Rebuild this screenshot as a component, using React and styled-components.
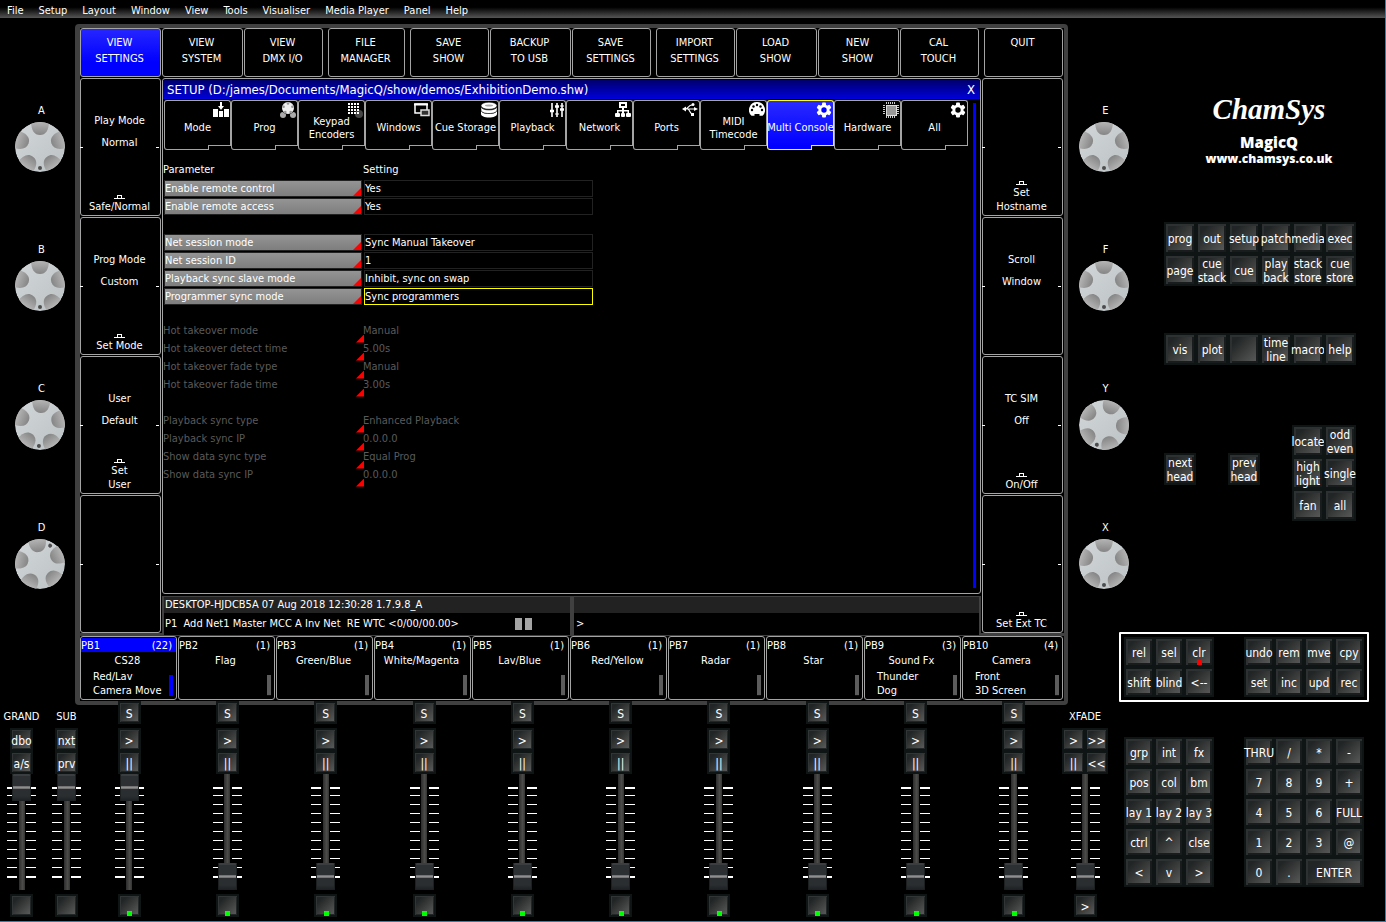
import React from "react";
import styled, { createGlobalStyle, css } from "styled-components";

const GlobalStyle = createGlobalStyle`
    *, *::before, *::after {
        box-sizing: border-box;
    }
    body {
        margin: 0;
        background: #000;
        color: #fff;
        font-family: "DejaVu Sans Condensed", "DejaVu Sans", sans-serif;
        font-stretch: condensed;
        font-size: 11px;
        line-height: 14px;
    }
    button, input {
        font: inherit;
        color: inherit;
        margin: 0;
        padding: 0;
    }
    button {
        border: none;
        background: none;
    }
`;

const Page = styled.div`
    min-height: 100vh;
    border-right: 1px solid #1883d7;
    border-bottom: 1px solid #1883d7;
`;

const MenuBar = styled.nav`
    display: flex;
    gap: 15px;
    height: 18px;
    padding: 2px 7px 0;
    background: linear-gradient(#000 40%, #555);
`;

const MenuItem = styled.button`
    height: 16px;
    padding-top: 1px;
    line-height: 16px;
`;

const Console = styled.div`
    display: grid;
    grid-template-columns: 75px minmax(900px, 1fr) 51px 10px 256px;
    grid-template-rows: auto 69px auto;
`;

/* ---- rotary encoders ---- */

const Encoders = styled.div`
    grid-row: 1;
    grid-column: ${props => props.$side === "left" ? "1" : "3 / 5"};
    display: flex;
    flex-direction: column;
    align-items: flex-end;
    gap: 71px;
    padding: 86px ${props => props.$side === "left" ? 10 : 0}px 43px 0;
`;

const EncoderBlock = styled.div`
    display: flex;
    flex-direction: column;
    align-items: center;
    gap: 4px;
    width: 50px;
`;

const EncoderLabel = styled.span`
    padding-left: 3px;
`;

const Knob = ({ turn }) => (
    <svg width="50" height="50" viewBox="-25 -25 50 50" aria-hidden="true">
        <defs>
            <linearGradient id="knobFace" x1="0" y1="0" x2="1" y2="1">
                <stop offset="0" stopColor="#d2d6d8" />
                <stop offset="1" stopColor="#bcc3c5" />
            </linearGradient>
            <linearGradient id="knobDimple" x1="0" y1="0" x2="0" y2="1">
                <stop offset="0" stopColor="#b9b8b8" />
                <stop offset="1" stopColor="#858585" />
            </linearGradient>
            <clipPath id="knobClip"><circle r="25" /></clipPath>
        </defs>
        <g clipPath="url(#knobClip)">
            <circle r="25" fill="url(#knobFace)" />
            <g transform={`rotate(${turn})`}>
                {[0, 72, 144, 216, 288].map(angle => (
                    <path
                        key={angle}
                        transform={`rotate(${angle})`}
                        d="M-9-26C-9-17-6-12 0-12S9-17 9-26Z"
                        fill="url(#knobDimple)"
                    />
                ))}
                <circle cy="21" r="2" fill="#4c4c4c" />
            </g>
        </g>
    </svg>
);

const Encoder = ({ name, turn = 0 }) => (
    <EncoderBlock>
        <EncoderLabel>{name}</EncoderLabel>
        <Knob turn={turn} />
    </EncoderBlock>
);

/* ---- screen ---- */

const Screen = styled.main`
    grid-row: 1 / 3;
    grid-column: 2;
    align-self: start;
    margin: 6px 0 -4px;
    border: 4px solid #404040;
    border-left-width: 5px;
    border-radius: 4px;
`;

const box = css`
    border: 1px solid #a4a4a4;
    border-radius: 3px;
    background: #000;
`;

const SoftKeys = styled.div`
    display: grid;
    grid-template-columns: repeat(12, 1fr);
    margin-bottom: 1px;
`;

const SoftKey = styled.button`
    ${box}
    display: flex;
    justify-content: center;
    height: 49px;
    padding: 6px 2px 0 0;
    margin: 0 ${props => props.$groupEnd ? 3 : 1}px 0 ${props => props.$groupStart ? 2 : 0}px;
    line-height: 16px;
    white-space: pre-line;
    background: ${props => props.$active ? "linear-gradient(#2626ff, #0000ff 70%)" : "#000"};
`;

const Middle = styled.div`
    display: grid;
    grid-template-columns: 81px 1fr 81px;
    gap: 1px;
    padding-right: 1px;
    background: #000;
`;

const SideColumn = styled.div`
    display: flex;
    flex-direction: column;
    gap: 1px;
`;

const SideButton = styled.button`
    ${box}
    position: relative;
    display: flex;
    flex-direction: column;
    align-items: center;
    height: 138px;
    padding: 35px 2px 1px 0;
    &::before, &::after {
        content: "";
        position: absolute;
        top: 68px;
        width: 3px;
        height: 1px;
        background: #fff;
    }
    &::before {
        left: -1px;
    }
    &::after {
        right: 1px;
    }
`;

const SideText = styled.span`
    height: 22px;
`;

const PushLabel = styled.span`
    display: flex;
    flex-direction: column;
    align-items: center;
    gap: 1px;
    margin-top: auto;
    white-space: pre-line;
`;

const PushIcon = () => (
    <svg width="11" height="4" viewBox="0 0 11 4" shapeRendering="crispEdges" aria-hidden="true">
        <path d="M0 3.5H11M3.5 3V.5H7.5V3" fill="none" stroke="#fff" />
    </svg>
);

const Main = styled.div`
    display: flex;
    flex-direction: column;
    gap: 2px;
    min-width: 0;
`;

const SetupWindow = styled.section`
    ${box}
    position: relative;
    flex: 1;
    padding-top: 1px;
`;

const TitleBar = styled.header`
    display: flex;
    justify-content: space-between;
    height: 19px;
    padding: 0 5px 0 4px;
    font-size: 13px;
    line-height: 20px;
    background: linear-gradient(#00006c, #0000dc);
`;

const Title = styled.h1`
    margin: 0;
    font-size: 13px;
    font-weight: normal;
`;

const Tabs = styled.div`
    display: grid;
    grid-template-columns: repeat(12, 67px);
    margin: 1px 0 0 1px;
`;

const Tab = styled.button`
    --line: ${props => props.$active ? "#ffff00" : "#a4a4a4"};
    --fill: ${props => props.$active ? "#0000ff" : "#000"};
    position: relative;
    display: flex;
    align-items: center;
    justify-content: center;
    height: 46px;
    padding-top: 8px;
    line-height: 13px;
    white-space: pre;
    border: 1px solid var(--line);
    border-bottom: none;
    border-radius: 3px 3px 0 0;
    background: ${props => props.$active ? "linear-gradient(#2a2aff, #0000ff)" : "#000"};
    &::before {
        content: "";
        position: absolute;
        left: -1px;
        bottom: -4px;
        width: 45px;
        height: 5px;
        border: 1px solid var(--line);
        border-top: none;
        border-bottom-left-radius: 3px;
        background: var(--fill);
    }
    &::after {
        content: "";
        position: absolute;
        left: 43px;
        right: 0;
        bottom: 0;
        height: 1px;
        background: var(--line);
    }
    svg {
        position: absolute;
        top: 1px;
        right: 1px;
    }
`;

const ScrollBar = styled.div`
    position: absolute;
    top: 24px;
    right: 4px;
    bottom: 5px;
    width: 3px;
    background: #0000ff;
`;

const Settings = styled.table`
    table-layout: fixed;
    width: 430px;
    margin-top: 15px;
    border-collapse: collapse;
    th, td {
        height: 18px;
        padding: 0;
        text-align: left;
        font-weight: normal;
    }
    thead th {
        height: 19px;
        padding-bottom: 2px;
    }
`;

const SpacerCell = styled.td`
    && {
        height: ${props => props.$height}px;
    }
`;

const NameColumn = styled.col`
    width: 200px;
`;

const ParamName = styled.div`
    position: relative;
    height: 17px;
    margin: 0 1px 1px;
    line-height: 16px;
    border: 1px solid #222;
    background: linear-gradient(#949494, #7e7e7e);
    &::after {
        content: "";
        position: absolute;
        right: 0;
        bottom: 0;
        width: 8px;
        height: 8px;
        background: #f00;
        clip-path: polygon(100% 0, 100% 100%, 0 100%);
    }
    ${props => props.$disabled && css`
        color: #5a5a5a;
        margin: 0;
        line-height: 14px;
        border: none;
        background: none;
        &::after {
            right: -1px;
            bottom: -2px;
        }
    `}
`;

const ParamValue = styled.div`
    height: 17px;
    margin: 0 0 1px 1px;
    line-height: 16px;
    border: 1px solid ${props => props.$selected ? "#ffff00" : "#222"};
    ${props => props.$disabled && css`
        color: #5a5a5a;
        margin: 0;
        line-height: 14px;
        border: none;
    `}
`;

const StatusBar = styled.div`
    display: grid;
    grid-template-columns: 406px 1fr;
    gap: 4px;
    height: 37px;
    padding: 1px 2px 0;
    background: #404040;
`;

const StatusCell = styled.div`
    padding-left: ${props => props.$inset}px;
    background: linear-gradient(#222 16px, #000 16px);
    white-space: pre;
`;

const StatusLine = styled.div`
    display: flex;
    align-items: center;
    justify-content: space-between;
    height: ${props => props.$tall ? 22 : 16}px;
    padding-right: 38px;
`;

const PauseMark = () => (
    <svg width="17" height="12" viewBox="0 0 17 12" fill="#a4a4a4" role="img" aria-label="Paused">
        <rect width="7" height="12" />
        <rect x="10" width="7" height="12" />
    </svg>
);

const Playbacks = styled.div`
    display: grid;
    grid-template-columns: repeat(9, 98fr) 102fr;
    border-top: 3px solid #404040;
    padding-bottom: 1px;
`;

const Playback = styled.button`
    ${box}
    position: relative;
    display: flex;
    flex-direction: column;
    height: 64px;
    margin-right: 1px;
    padding-top: 1px;
    text-align: left;
    &::after {
        content: "";
        position: absolute;
        right: 3px;
        bottom: 3px;
        width: 4px;
        height: 21px;
        background: ${props => props.$active ? "#0000ff" : "linear-gradient(#5c5c5c 20px, #00008c 20px)"};
    }
`;

const PlaybackHead = styled.span`
    display: flex;
    justify-content: space-between;
    align-self: stretch;
    height: 14px;
    padding-right: 4px;
    line-height: 16px;
    background: ${props => props.$active ? "#0000ff" : "none"};
`;

const PlaybackName = styled.span`
    align-self: stretch;
    height: 16px;
    margin-top: 2px;
    padding-right: 2px;
    text-align: center;
`;

const PlaybackCues = styled.span`
    padding-left: 12px;
    white-space: pre-line;
`;

/* ---- keys ---- */

const Key = styled.button`
    position: relative;
    display: flex;
    align-items: center;
    justify-content: center;
    grid-column: span ${props => props.$span || 1};
    height: ${props => props.$size}px;
    min-width: 0;
    padding-top: 1px;
    font-size: 12px;
    line-height: 14px;
    text-align: center;
    white-space: pre;
    border: 2px solid #0f1515;
    background: linear-gradient(135deg, #222525 20%, #5c5c5c);
    box-shadow: inset 2px 2px 0 #2e3131, inset -2px -2px 0 #181c1c;
    &::after {
        content: "";
        display: ${props => props.$led ? "block" : "none"};
        position: absolute;
        left: calc(50% - 2px);
        bottom: 0;
        width: 5px;
        height: 5px;
        background: ${props => props.$led};
    }
`;

const SmallKey = styled(Key)`
    width: 23px;
    padding-top: 3px;
    box-shadow: inset 1px 1px 0 #323535, inset -1px -1px 0 #222626;
    &::after {
        bottom: -1px;
    }
`;

const KeyGrid = styled.div`
    display: grid;
    grid-template-columns: repeat(${props => props.$cols}, ${props => props.$size}px);
`;

const Keys = ({ cols, size, rows }) => (
    <KeyGrid $cols={cols} $size={size}>
        {rows.flat().map(key => (
            <Key
                key={key}
                $size={size}
                $span={key === "ENTER" ? 2 : 1}
                $led={key === "clr" ? "#f00" : null}
            >
                {key}
            </Key>
        ))}
    </KeyGrid>
);

const TopPanel = styled.aside`
    grid-row: 1;
    grid-column: 5;
    display: flex;
    flex-direction: column;
    width: 227px;
    padding: 68px 0 0 35px;
`;

const Brand = styled.div`
    display: flex;
    flex-direction: column;
    align-items: center;
    height: 136px;
    padding-left: 18px;
    font-family: "Open Sans", sans-serif;
    font-stretch: normal;
    font-weight: 800;
`;

const BrandScript = styled.span`
    height: 47px;
    font-family: "Brush Script MT", "Liberation Serif", serif;
    font-size: 29px;
    font-style: italic;
    font-weight: bold;
    line-height: 47px;
`;

const BrandName = styled.span`
    font-size: 15px;
    line-height: 18px;
`;

const BrandLink = styled.a`
    font-size: 12px;
    line-height: 16px;
    color: inherit;
    text-decoration: none;
`;

const HeadKeys = styled.div`
    display: flex;
    justify-content: space-between;
    align-items: flex-start;
    margin-top: 60px;
`;

const HeadNav = styled.div`
    display: grid;
    grid-template-columns: 32px 32px;
    gap: 32px;
    margin-top: 28px;
`;

const ShortcutKeys = styled.div`
    margin-top: 47px;
`;

const LowerPanel = styled.aside`
    grid-row: 2 / 4;
    grid-column: 4 / 6;
    width: 250px;
`;

const EditKeys = styled.div`
    display: flex;
    gap: 30px;
    padding: 3px;
    border: 2px solid #fff;
    border-radius: 1px;
`;

const NumberKeys = styled.div`
    display: flex;
    gap: 30px;
    padding: 35px 5px 0;
`;

/* ---- faders ---- */

const Faders = styled.section`
    grid-row: 3;
    grid-column: 1 / 4;
    display: grid;
    grid-template-columns: 80px 1fr 55px;
    padding-bottom: 4px;
    z-index: 1;
`;

const Masters = styled.div`
    display: flex;
    gap: 22px;
    padding-left: 10px;
`;

const Channels = styled.div`
    display: grid;
    grid-template-columns: repeat(10, 1fr);
    margin-right: 1px;
`;

const Channel = styled.div`
    display: flex;
    flex-direction: column;
    align-items: center;
`;

const MasterChannel = styled(Channel)`
    width: 23px;
`;

const CrossFade = styled(Channel)`
    width: 46px;
    margin-left: -2px;
`;

const ChannelTop = styled.div`
    display: flex;
    justify-content: center;
    height: 27px;
`;

const ChannelLabel = styled.label`
    padding-top: 9px;
`;

const KeyPair = styled.div`
    display: flex;
`;

const FaderSlot = styled.div`
    position: relative;
    display: flex;
    justify-content: center;
    width: 29px;
    height: 116px;
    margin-bottom: 4px;
    svg {
        position: absolute;
        top: 0;
        left: 0;
    }
`;

const thumb = css`
    width: 19px;
    height: 27px;
    border: none;
    border-radius: 1px;
    background: linear-gradient(#2c3032 0 12px, #747474 12px 13px, #8e8e8e 13px 14px, #747474 14px 15px, #2a2e30 15px 22px, #1c2022 27px);
    box-shadow: inset 1px 0 0 #1c2021, inset -1px 0 0 #1c2021, inset 0 2px 0 #3a3e40;
`;

const FaderInput = styled.input`
    position: relative;
    appearance: none;
    writing-mode: vertical-lr;
    direction: rtl;
    width: 19px;
    height: 116px;
    background: linear-gradient(90deg, #2c2c2c, #4c4c4a 60%, #333) center / 6px 100% no-repeat;
    &::-webkit-slider-thumb {
        appearance: none;
        ${thumb}
    }
    &::-moz-range-thumb {
        ${thumb}
    }
`;

const TICKS = [21, 30, 39, 48, 57, 66, 75, 84, 93];

const Fader = ({ id, name, value }) => (
    <FaderSlot>
        <svg width="29" height="116" viewBox="0 0 29 116" fill="#fff" shapeRendering="crispEdges" aria-hidden="true">
            {[13, 102].map(y => (
                <path key={y} d={`M0 ${y}h10v2H0zM19 ${y}h10v2H19z`} />
            ))}
            {TICKS.map(y => (
                <path key={y} d={`M0 ${y}h10v1H0zM19 ${y}h10v1H19z`} />
            ))}
        </svg>
        <FaderInput id={id} type="range" defaultValue={value} aria-label={name} />
    </FaderSlot>
);

/* ---- tab icons ---- */

const ModeIcon = () => (
    <svg width="16" height="16" fill="#fff">
        <path d="M0 7h5v8H0zM6 9h4v6H6zM11 7h5v8h-5zM7 0h2v4h2L8 8 5 4h2z" />
    </svg>
);

const ProgIcon = () => (
    <svg width="16" height="16">
        <circle cx="3" cy="13" r="3" fill="#aaa" />
        <circle cx="13" cy="13" r="3" fill="#aaa" />
        <circle cx="8" cy="6" r="6.5" fill="#000" />
        <circle cx="8" cy="6" r="6" fill="#eee" />
        <g fill="#999">
            <circle cx="8" cy="1.5" r="1.3" />
            <circle cx="3.6" cy="4.7" r="1.3" />
            <circle cx="12.4" cy="4.7" r="1.3" />
            <circle cx="5.3" cy="10" r="1.3" />
            <circle cx="10.7" cy="10" r="1.3" />
        </g>
    </svg>
);

const KeypadIcon = () => (
    <svg width="16" height="16">
        <circle cx="12" cy="12" r="4" fill="#444" />
        <g fill="#fff">
            {[0, 3, 6, 9].map(y => [1, 4, 7, 10].map(x => (
                <rect key={`${x}-${y}`} x={x} y={y + 1} width="2" height="2" />
            )))}
        </g>
    </svg>
);

const WindowsIcon = () => (
    <svg width="16" height="16" fill="none" stroke="#fff">
        <rect x="1" y="2" width="12" height="9" fill="#000" strokeWidth="1.5" />
        <path d="M0 2.5h14" strokeWidth="2" />
        <rect x="7" y="8" width="8" height="5.5" fill="#333" strokeWidth="1.5" stroke="#ddd" />
    </svg>
);

const StorageIcon = () => (
    <svg width="16" height="16" fill="#fff">
        <path d="M0 9v3c0 2 3.500 3.500 8 3.500s8-1.500 8-3.500V9c-1 2-4 3-8 3S1 11 0 9z" />
        <path d="M0 5v3c0 2 3.500 3.500 8 3.500s8-1.500 8-3.500V5c-1 2-4 3-8 3S1 7 0 5z" stroke="#000" strokeWidth="0.5" />
        <ellipse cx="8" cy="3.700" rx="8" ry="3.500" stroke="#000" strokeWidth="0.5" />
        <ellipse cx="8" cy="3.500" rx="4" ry="1" fill="#aaa" />
    </svg>
);

const PlaybackIcon = () => (
    <svg width="14" height="16" stroke="#fff">
        <path d="M2 1v14M7 1v14M12 1v14" strokeWidth="1.6" />
        <path d="M0 9h4M5 4.500h4M10 7.500h4" strokeWidth="2.400" />
        <path d="M0 9h4M5 12h4M10 4h4" strokeWidth="1" />
    </svg>
);

const NetworkIcon = () => (
    <svg width="16" height="16" fill="#fff">
        <path d="M4 0h8v6H4zM7 6h2v2h5v3h-1.500V9.500H9V11H7V9.500H3.500V11H2V8h5z" />
        <path d="M6 2h4v2H6z" fill="#000" />
        <rect x="0" y="11" width="5" height="4" rx="1" />
        <rect x="6" y="11" width="4" height="4" rx="1" />
        <rect x="11" y="11" width="5" height="4" rx="1" />
    </svg>
);

const PortsIcon = () => (
    <svg width="16" height="16" fill="none" stroke="#fff" strokeWidth="1.200">
        <path d="M2 7h11M4 7c2-1 3-4 6-4M6 7c2 1 2 5 5 5.500" />
        <path d="M0 7l4-2.500v5zM12 5l4 2-4 2z" fill="#fff" stroke="none" />
        <circle cx="11" cy="2.500" r="1.500" fill="#fff" stroke="none" />
        <rect x="9" y="11" width="3" height="3" fill="#fff" stroke="none" />
    </svg>
);

const MidiIcon = () => (
    <svg width="16" height="16">
        <path d="M8 0a8 8 0 0 1 5.500 13.800H10.500V12h-5v1.800h-3A8 8 0 0 1 8 0z" fill="#fff" />
        <g fill="#000">
            <circle cx="3" cy="8" r="1.200" />
            <circle cx="4.500" cy="4.500" r="1.200" />
            <circle cx="8" cy="3" r="1.200" />
            <circle cx="11.500" cy="4.500" r="1.200" />
            <circle cx="13" cy="8" r="1.200" />
        </g>
    </svg>
);

const GearIcon = () => (
    <svg width="16" height="16" viewBox="-8 -8 16 16">
        <g fill="#fff">
            {[0, 60, 120].map(a => (
                <rect key={a} x="-2" y="-7.500" width="4" height="15" rx="1" transform={`rotate(${a})`} />
            ))}
            <circle r="5.600" />
        </g>
        <circle r="2.700" fill="var(--fill)" />
    </svg>
);

const ChipIcon = () => (
    <svg width="16" height="16" shapeRendering="crispEdges">
        <path d="M3.500 0v16M5.500 0v16M7.500 0v16M9.500 0v16M11.500 0v16M0 3.500h16M0 5.500h16M0 7.500h16M0 9.500h16M0 11.500h16" stroke="#ccc" />
        <rect x="2" y="2" width="12" height="12" fill="#000" />
        <rect x="3" y="3" width="10" height="10" fill="#999" stroke="#ddd" />
    </svg>
);

/* ---- data ---- */

const menus = ["File", "Setup", "Layout", "Window", "View", "Tools", "Visualiser", "Media Player", "Panel", "Help"];

const softKeys = [
    { text: "VIEW\nSETTINGS", active: true },
    { text: "VIEW\nSYSTEM" },
    { text: "VIEW\nDMX I/O", end: true },
    { text: "FILE\nMANAGER", start: true, end: true },
    { text: "SAVE\nSHOW", start: true },
    { text: "BACKUP\nTO USB" },
    { text: "SAVE\nSETTINGS", end: true },
    { text: "IMPORT\nSETTINGS", start: true },
    { text: "LOAD\nSHOW" },
    { text: "NEW\nSHOW" },
    { text: "CAL\nTOUCH", end: true },
    { text: "QUIT", start: true },
];

const leftButtons = [
    { lines: ["Play Mode", "Normal"], push: "Safe/Normal" },
    { lines: ["Prog Mode", "Custom"], push: "Set Mode" },
    { lines: ["User", "Default"], push: "Set\nUser" },
    { lines: [] },
];

const rightButtons = [
    { lines: [], push: "Set\nHostname" },
    { lines: ["Scroll", "Window"] },
    { lines: ["TC SIM", "Off"], push: "On/Off" },
    { lines: [], push: "Set Ext TC" },
];

const tabs = [
    { name: "Mode", icon: <ModeIcon /> },
    { name: "Prog", icon: <ProgIcon /> },
    { name: "Keypad\nEncoders", icon: <KeypadIcon /> },
    { name: "Windows", icon: <WindowsIcon /> },
    { name: "Cue Storage", icon: <StorageIcon /> },
    { name: "Playback", icon: <PlaybackIcon /> },
    { name: "Network", icon: <NetworkIcon /> },
    { name: "Ports", icon: <PortsIcon /> },
    { name: "MIDI\nTimecode", icon: <MidiIcon /> },
    { name: "Multi Console", icon: <GearIcon />, active: true },
    { name: "Hardware", icon: <ChipIcon /> },
    { name: "All", icon: <GearIcon /> },
];

const settings = [
    { name: "Enable remote control", value: "Yes" },
    { name: "Enable remote access", value: "Yes" },
    { gap: 18 },
    { name: "Net session mode", value: "Sync Manual Takeover" },
    { name: "Net session ID", value: "1" },
    { name: "Playback sync slave mode", value: "Inhibit, sync on swap" },
    { name: "Programmer sync mode", value: "Sync programmers", selected: true },
    { gap: 17 },
    { name: "Hot takeover mode", value: "Manual", disabled: true },
    { name: "Hot takeover detect time", value: "5.00s", disabled: true },
    { name: "Hot takeover fade type", value: "Manual", disabled: true },
    { name: "Hot takeover fade time", value: "3.00s", disabled: true },
    { gap: 18 },
    { name: "Playback sync type", value: "Enhanced Playback", disabled: true },
    { name: "Playback sync IP", value: "0.0.0.0", disabled: true },
    { name: "Show data sync type", value: "Equal Prog", disabled: true },
    { name: "Show data sync IP", value: "0.0.0.0", disabled: true },
];

const playbacks = [
    { name: "CS28", count: 22, cues: "Red/Lav\nCamera Move", active: true, level: 100 },
    { name: "Flag", count: 1, level: 0 },
    { name: "Green/Blue", count: 1, level: 0 },
    { name: "White/Magenta", count: 1, level: 0 },
    { name: "Lav/Blue", count: 1, level: 0 },
    { name: "Red/Yellow", count: 1, level: 0 },
    { name: "Radar", count: 1, level: 0 },
    { name: "Star", count: 1, level: 0 },
    { name: "Sound Fx", count: 3, cues: "Thunder\nDog", level: 0 },
    { name: "Camera", count: 4, cues: "Front\n3D Screen", level: 0 },
];

const windowKeys = [
    ["prog", "out", "setup", "patch", "media", "exec"],
    ["page", "cue\nstack", "cue", "play\nback", "stack\nstore", "cue\nstore"],
];
const shortcutKeys = [["vis", "plot", "", "time\nline", "macro", "help"]];
const selectKeys = [["locate", "odd\neven"], ["high\nlight", "single"], ["fan", "all"]];
const clearKeys = [["rel", "sel", "clr"], ["shift", "blind", "<--"]];
const recordKeys = [["undo", "rem", "mve", "cpy"], ["set", "inc", "upd", "rec"]];
const layoutKeys = [
    ["grp", "int", "fx"],
    ["pos", "col", "bm"],
    ["lay 1", "lay 2", "lay 3"],
    ["ctrl", "^", "clse"],
    ["<", "v", ">"],
];
const numberKeys = [
    ["THRU", "/", "*", "-"],
    ["7", "8", "9", "+"],
    ["4", "5", "6", "FULL"],
    ["1", "2", "3", "@"],
    ["0", ".", "ENTER"],
];

const renderSide = (buttons) => (
    <SideColumn>
        {buttons.map((button, index) => (
            <SideButton key={index}>
                {button.lines.map(line => <SideText key={line}>{line}</SideText>)}
                {button.push && <PushLabel><PushIcon />{button.push}</PushLabel>}
            </SideButton>
        ))}
    </SideColumn>
);

const renderSettings = () => settings.map((row, index) => {
    if (row.gap) {
        return <tr key={index}><SpacerCell colSpan={2} $height={row.gap} /></tr>;
    }
    return (
        <tr key={index}>
            <td><ParamName $disabled={row.disabled}>{row.name}</ParamName></td>
            <td><ParamValue $disabled={row.disabled} $selected={row.selected}>{row.value}</ParamValue></td>
        </tr>
    );
});

const Master = ({ id, name, keys }) => (
    <MasterChannel>
        <ChannelTop><ChannelLabel htmlFor={id}>{name}</ChannelLabel></ChannelTop>
        {keys.map(key => <SmallKey key={key} $size={23}>{key}</SmallKey>)}
        <Fader id={id} name={name} value={100} />
        <SmallKey $size={23} aria-label={`${name} flash`} />
    </MasterChannel>
);

const App = () => (
    <Page>
        <GlobalStyle />
        <MenuBar>
            {menus.map(menu => <MenuItem key={menu}>{menu}</MenuItem>)}
        </MenuBar>
        <Console>
            <Encoders $side="left">
                <Encoder name="A" />
                <Encoder name="B" />
                <Encoder name="C" turn={3} />
                <Encoder name="D" turn={-151} />
            </Encoders>

            <Screen>
                <SoftKeys>
                    {softKeys.map(key => (
                        <SoftKey key={key.text} $active={key.active} $groupStart={key.start} $groupEnd={key.end}>
                            {key.text}
                        </SoftKey>
                    ))}
                </SoftKeys>
                <Middle>
                    {renderSide(leftButtons)}
                    <Main>
                        <SetupWindow>
                            <TitleBar>
                                <Title>SETUP (D:/james/Documents/MagicQ/show/demos/ExhibitionDemo.shw)</Title>
                                <button>X</button>
                            </TitleBar>
                            <Tabs>
                                {tabs.map(tab => (
                                    <Tab key={tab.name} $active={tab.active}>{tab.name}{tab.icon}</Tab>
                                ))}
                            </Tabs>
                            <Settings>
                                <colgroup>
                                    <NameColumn />
                                    <col />
                                </colgroup>
                                <thead>
                                    <tr><th>Parameter</th><th>Setting</th></tr>
                                </thead>
                                <tbody>{renderSettings()}</tbody>
                            </Settings>
                            <ScrollBar />
                        </SetupWindow>
                        <StatusBar>
                            <StatusCell $inset={1}>
                                <StatusLine>DESKTOP-HJDCB5A 07 Aug 2018 12:30:28 1.7.9.8_A</StatusLine>
                                <StatusLine $tall>{"P1  Add Net1 Master MCC A Inv Net  RE WTC <0/00/00.00>"}<PauseMark /></StatusLine>
                            </StatusCell>
                            <StatusCell $inset={2}>
                                <StatusLine />
                                <StatusLine $tall>&gt;</StatusLine>
                            </StatusCell>
                        </StatusBar>
                    </Main>
                    {renderSide(rightButtons)}
                </Middle>
                <Playbacks>
                    {playbacks.map((pb, index) => (
                        <Playback key={pb.name} $active={pb.active}>
                            <PlaybackHead $active={pb.active}>
                                <span>PB{index + 1}</span>
                                <span>({pb.count})</span>
                            </PlaybackHead>
                            <PlaybackName>{pb.name}</PlaybackName>
                            {pb.cues && <PlaybackCues>{pb.cues}</PlaybackCues>}
                        </Playback>
                    ))}
                </Playbacks>
            </Screen>

            <Encoders $side="right">
                <Encoder name="E" />
                <Encoder name="F" />
                <Encoder name="Y" turn={20} />
                <Encoder name="X" />
            </Encoders>

            <TopPanel>
                <Brand>
                    <BrandScript>ChamSys</BrandScript>
                    <BrandName>MagicQ</BrandName>
                    <BrandLink href="#">www.chamsys.co.uk</BrandLink>
                </Brand>
                <Keys cols={6} size={32} rows={windowKeys} />
                <ShortcutKeys>
                    <Keys cols={6} size={32} rows={shortcutKeys} />
                </ShortcutKeys>
                <HeadKeys>
                    <HeadNav>
                        <Key $size={32}>{"next\nhead"}</Key>
                        <Key $size={32}>{"prev\nhead"}</Key>
                    </HeadNav>
                    <Keys cols={2} size={32} rows={selectKeys} />
                </HeadKeys>
            </TopPanel>

            <Faders>
                <Masters>
                    <Master id="grand" name="GRAND" keys={["dbo", "a/s"]} />
                    <Master id="sub" name="SUB" keys={["nxt", "prv"]} />
                </Masters>
                <Channels>
                    {playbacks.map((pb, index) => (
                        <Channel key={pb.name}>
                            <ChannelTop><SmallKey $size={23}>S</SmallKey></ChannelTop>
                            <SmallKey $size={23}>&gt;</SmallKey>
                            <SmallKey $size={23}>||</SmallKey>
                            <Fader id={`pb${index + 1}`} name={`PB${index + 1}`} value={pb.level} />
                            <SmallKey $size={23} $led="#0f0" aria-label={`Flash ${pb.name}`} />
                        </Channel>
                    ))}
                </Channels>
                <CrossFade>
                    <ChannelTop><ChannelLabel htmlFor="xfade">XFADE</ChannelLabel></ChannelTop>
                    <KeyPair>
                        <SmallKey $size={23}>&gt;</SmallKey>
                        <SmallKey $size={23}>&gt;&gt;</SmallKey>
                    </KeyPair>
                    <KeyPair>
                        <SmallKey $size={23}>||</SmallKey>
                        <SmallKey $size={23}>&lt;&lt;</SmallKey>
                    </KeyPair>
                    <Fader id="xfade" name="XFADE" value={0} />
                    <SmallKey $size={23}>&gt;</SmallKey>
                </CrossFade>
            </Faders>

            <LowerPanel>
                <EditKeys>
                    <Keys cols={3} size={30} rows={clearKeys} />
                    <Keys cols={4} size={30} rows={recordKeys} />
                </EditKeys>
                <NumberKeys>
                    <Keys cols={3} size={30} rows={layoutKeys} />
                    <Keys cols={4} size={30} rows={numberKeys} />
                </NumberKeys>
            </LowerPanel>
        </Console>
    </Page>
);

export default App;
